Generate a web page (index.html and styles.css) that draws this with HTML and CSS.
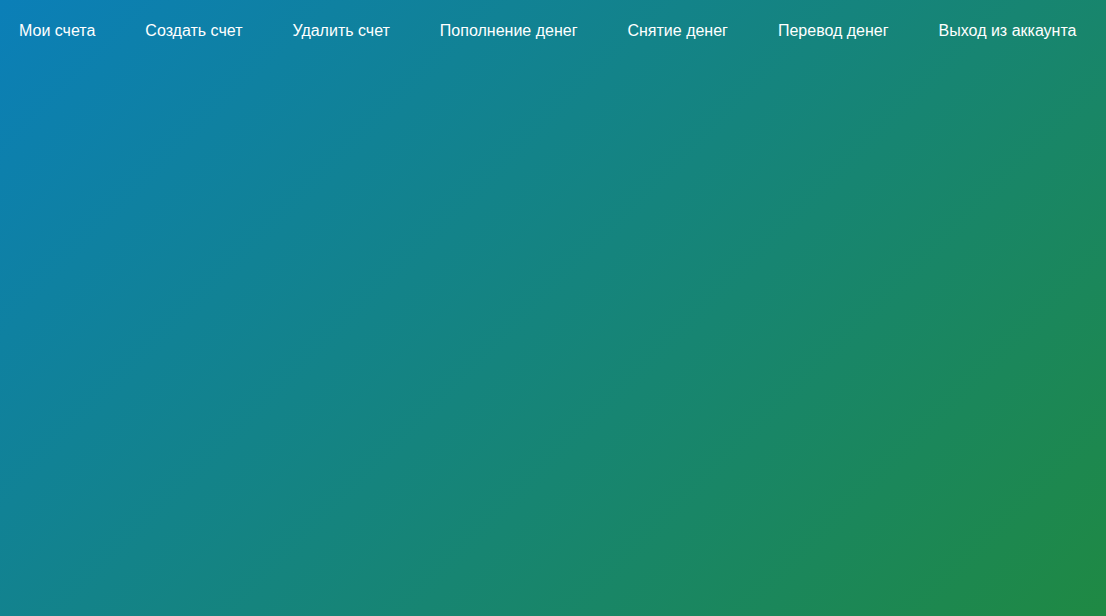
FILE: index.html
```html
<!DOCTYPE html>
<html lang="ru">
<head>
<meta charset="utf-8">
<title>Банк</title>
<link rel="stylesheet" href="styles.css">
</head>
<body>
<nav class="nav">
  <a class="nav-link" href="#">Мои счета</a>
  <a class="nav-link" href="#">Создать счет</a>
  <a class="nav-link" href="#">Удалить счет</a>
  <a class="nav-link" href="#">Пополнение денег</a>
  <a class="nav-link" href="#">Снятие денег</a>
  <a class="nav-link" href="#">Перевод денег</a>
  <a class="nav-link" href="#">Выход из аккаунта</a>
</nav>
</body>
</html>
```
FILE: styles.css
```css
html, body {
  margin: 0;
  padding: 0;
  height: 100%;
}
body {
  background: linear-gradient(135deg, #0b7fb8, #1f8943);
  font-family: "Liberation Sans", Arial, sans-serif;
}
.nav {
  display: flex;
  gap: 50px;
  padding: 21px 19px 19px;
}
.nav-link {
  color: #ffffff;
  text-decoration: none;
  font-size: 16px;
  line-height: 20px;
}
```
